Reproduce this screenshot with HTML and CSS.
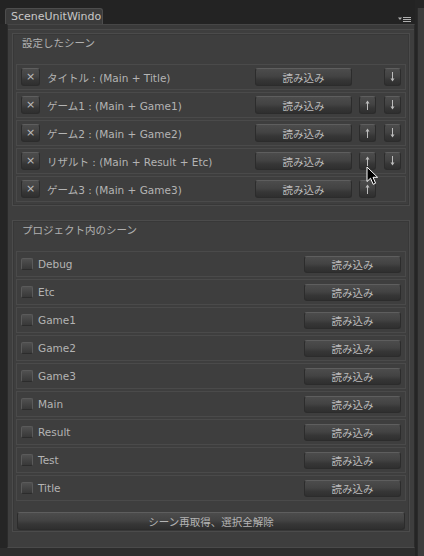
FILE: index.html
```html
<!DOCTYPE html>
<html lang="ja">
<head>
<meta charset="utf-8">
<title>SceneUnitWindow</title>
<link rel="stylesheet" href="styles.css">
</head>
<body>
<div class="screen">
  <div class="content">
    <div class="topbar">
      <div class="tab">SceneUnitWindo</div>
      <div class="menu">
        <svg width="14" height="6" viewBox="0 0 14 6">
          <path d="M0 0.5H4L2 3Z" fill="#b0b0b0"/>
          <rect x="5" y="0" width="8" height="1" fill="#b0b0b0"/>
          <rect x="5" y="2" width="8" height="1" fill="#b0b0b0"/>
          <rect x="5" y="4" width="8" height="1" fill="#b0b0b0"/>
        </svg>
      </div>
    </div>
    <div class="window">
      <section class="panel">
        <div class="panel-title">設定したシーン</div>
        <div class="row">
          <div class="xbtn">×</div>
          <span class="label">タイトル : (Main + Title)</span>
          <div class="btn load">読み込み</div>
          <span class="slot up"></span>
          <div class="btn arrow"><svg width="7" height="10" viewBox="0 0 7 10"><path d="M3.5 0V8" stroke="#bdbdbd" stroke-width="1"/><path d="M1.5 6.5H5.5L3.5 9.5Z" fill="#bdbdbd"/></svg></div>
        </div>
        <div class="row">
          <div class="xbtn">×</div>
          <span class="label">ゲーム1 : (Main + Game1)</span>
          <div class="btn load">読み込み</div>
          <div class="btn arrow up"><svg width="7" height="10" viewBox="0 0 7 10"><path d="M3.5 2V10" stroke="#bdbdbd" stroke-width="1"/><path d="M1.5 3.5H5.5L3.5 0.5Z" fill="#bdbdbd"/></svg></div>
          <div class="btn arrow"><svg width="7" height="10" viewBox="0 0 7 10"><path d="M3.5 0V8" stroke="#bdbdbd" stroke-width="1"/><path d="M1.5 6.5H5.5L3.5 9.5Z" fill="#bdbdbd"/></svg></div>
        </div>
        <div class="row">
          <div class="xbtn">×</div>
          <span class="label">ゲーム2 : (Main + Game2)</span>
          <div class="btn load">読み込み</div>
          <div class="btn arrow up"><svg width="7" height="10" viewBox="0 0 7 10"><path d="M3.5 2V10" stroke="#bdbdbd" stroke-width="1"/><path d="M1.5 3.5H5.5L3.5 0.5Z" fill="#bdbdbd"/></svg></div>
          <div class="btn arrow"><svg width="7" height="10" viewBox="0 0 7 10"><path d="M3.5 0V8" stroke="#bdbdbd" stroke-width="1"/><path d="M1.5 6.5H5.5L3.5 9.5Z" fill="#bdbdbd"/></svg></div>
        </div>
        <div class="row">
          <div class="xbtn">×</div>
          <span class="label">リザルト : (Main + Result + Etc)</span>
          <div class="btn load">読み込み</div>
          <div class="btn arrow up"><svg width="7" height="10" viewBox="0 0 7 10"><path d="M3.5 2V10" stroke="#bdbdbd" stroke-width="1"/><path d="M1.5 3.5H5.5L3.5 0.5Z" fill="#bdbdbd"/></svg></div>
          <div class="btn arrow"><svg width="7" height="10" viewBox="0 0 7 10"><path d="M3.5 0V8" stroke="#bdbdbd" stroke-width="1"/><path d="M1.5 6.5H5.5L3.5 9.5Z" fill="#bdbdbd"/></svg></div>
        </div>
        <div class="row">
          <div class="xbtn">×</div>
          <span class="label">ゲーム3 : (Main + Game3)</span>
          <div class="btn load">読み込み</div>
          <div class="btn arrow up"><svg width="7" height="10" viewBox="0 0 7 10"><path d="M3.5 2V10" stroke="#bdbdbd" stroke-width="1"/><path d="M1.5 3.5H5.5L3.5 0.5Z" fill="#bdbdbd"/></svg></div>
          <span class="slot"></span>
        </div>
      </section>

      <section class="panel panel-project">
        <div class="panel-title">プロジェクト内のシーン</div>
        <div class="row prow"><span class="check"></span><span class="label">Debug</span><div class="btn load">読み込み</div></div>
        <div class="row prow"><span class="check"></span><span class="label">Etc</span><div class="btn load">読み込み</div></div>
        <div class="row prow"><span class="check"></span><span class="label">Game1</span><div class="btn load">読み込み</div></div>
        <div class="row prow"><span class="check"></span><span class="label">Game2</span><div class="btn load">読み込み</div></div>
        <div class="row prow"><span class="check"></span><span class="label">Game3</span><div class="btn load">読み込み</div></div>
        <div class="row prow"><span class="check"></span><span class="label">Main</span><div class="btn load">読み込み</div></div>
        <div class="row prow"><span class="check"></span><span class="label">Result</span><div class="btn load">読み込み</div></div>
        <div class="row prow"><span class="check"></span><span class="label">Test</span><div class="btn load">読み込み</div></div>
        <div class="row prow"><span class="check"></span><span class="label">Title</span><div class="btn load">読み込み</div></div>
        <div class="btn wide">シーン再取得、選択全解除</div>
      </section>
    </div>
    <div class="footer"></div>
  </div>
  <div class="scrollbar"></div>
  <svg class="cursor" width="13" height="20" viewBox="0 0 13 20">
    <path d="M1 1V15.5L4.5 12.2L7.2 18.3L9.6 17.2L7 11.3H11.6Z" fill="#000" stroke="#fff" stroke-width="1" stroke-linejoin="round"/>
  </svg>
</div>
</body>
</html>
```

FILE: styles.css
```css
html, body {
  margin: 0;
  padding: 0;
}

body {
  background: #252525;
  font-family: "DejaVu Sans", "Noto Sans CJK JP", sans-serif;
  font-size: 10.5px;
  color: #b2b2b2;
}

.screen {
  position: relative;
  width: 424px;
  height: 556px;
  display: flex;
  overflow: hidden;
}

.content {
  width: 416px;
  display: flex;
  flex-direction: column;
}

.topbar {
  height: 24px;
  flex: none;
  display: flex;
  align-items: flex-end;
  justify-content: space-between;
  background: #232323;
}

.tab {
  margin-left: 5px;
  width: 98px;
  height: 16px;
  box-sizing: border-box;
  background: #3b3b3b;
  border: 1px solid #4d4d4d;
  border-bottom: none;
  border-radius: 3px 3px 0 0;
  color: #c8c8c8;
  font-size: 11px;
  line-height: 15px;
  padding-left: 5px;
  white-space: nowrap;
  overflow: hidden;
}

.menu {
  width: 14px;
  height: 6px;
  margin-right: 3px;
  margin-bottom: 1px;
  display: flex;
}

.window {
  margin-left: 7px;
  width: 408px;
  height: 524px;
  flex: none;
  box-sizing: border-box;
  border: 1px solid #2b2b2b;
  border-top-color: #464646;
  border-bottom-color: #4a4a4a;
  background: linear-gradient(to bottom, #3a3a3a 0, #3a3a3a 4px, #4a4a4a 4px, #4a4a4a 5px, #3e3e3e 5px);
  padding: 8px 4px 0;
}

.panel {
  border: 1px solid #4b4b4b;
  box-shadow: inset 0 0 0 1px #383838;
  padding: 0 3px 1px;
}

.panel-project {
  margin-top: 14px;
}

.panel-title {
  height: 30px;
  box-sizing: border-box;
  padding: 2px 0 0 6px;
  line-height: 14px;
  color: #b0b0b0;
}

.row {
  height: 26px;
  margin-bottom: 2px;
  box-sizing: border-box;
  border: 1px solid #4a4a4a;
  display: flex;
  align-items: center;
  padding: 0 4px;
}

.label {
  flex: 1;
  white-space: nowrap;
  color: #b4b4b4;
}

.btn,
.xbtn {
  box-sizing: border-box;
  height: 18px;
  display: flex;
  align-items: center;
  justify-content: center;
  border: 1px solid #2c2c2c;
  border-top-color: #5e5e5e;
  border-radius: 3px;
  background: linear-gradient(to bottom, #4c4c4c 0%, #434343 45%, #363636 70%, #2f2f2f 100%);
  color: #bcbcbc;
  white-space: nowrap;
}

.xbtn {
  width: 19px;
  margin-right: 7px;
  font-size: 11px;
  line-height: 1;
  padding-bottom: 1px;
}

.load {
  width: 97px;
}

.arrow {
  width: 17px;
}

.arrow.up,
.slot.up {
  margin-left: 7px;
  margin-right: 8px;
}

.slot {
  width: 17px;
  height: 18px;
}

.check {
  width: 12px;
  height: 12px;
  box-sizing: border-box;
  border: 1px solid #5a5a5a;
  border-bottom-color: #2c2c2c;
  border-radius: 2px;
  background: linear-gradient(to bottom, #505050, #383838);
  margin-right: 5px;
}

.prow .load {
  height: 17px;
}

.wide {
  margin: 11px 1px 0;
  height: 18px;
  color: #b4b4b4;
}

.footer {
  flex: 1;
  background: #2d2d2d;
}

.scrollbar {
  width: 6px;
  margin-left: 2px;
  margin-top: 8px;
  background: #3c3c3c;
  border-left: 1px solid #2a2a2a;
}

.cursor {
  position: absolute;
  left: 366px;
  top: 166px;
}
```
